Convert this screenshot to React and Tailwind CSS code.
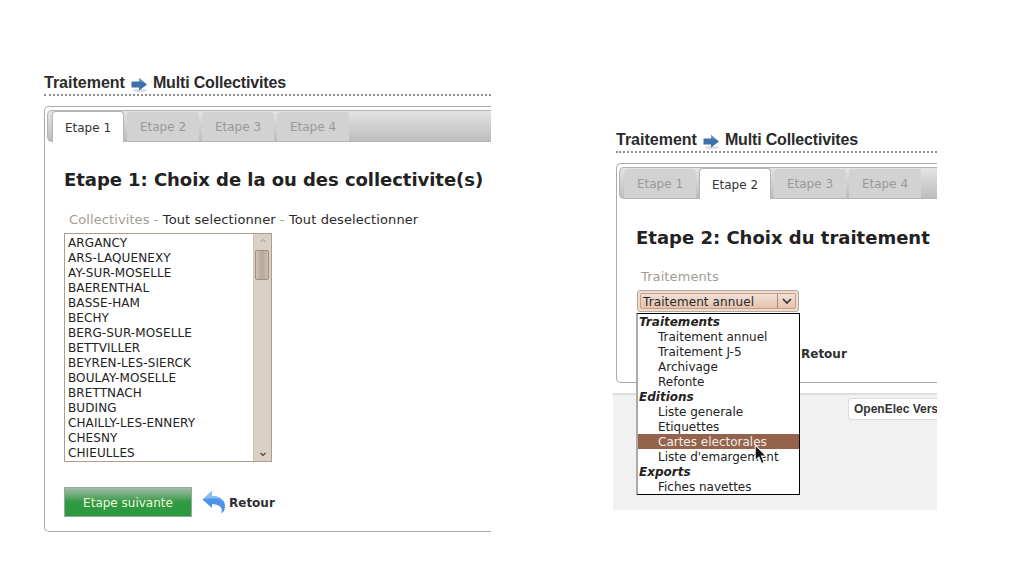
const DJ = "font-['DejaVu_Sans',sans-serif]";

function Arrow() {
  return (
    <svg width="17" height="16" viewBox="0 0 17 16" className="shrink-0">
      <ellipse cx="9" cy="13.5" rx="7" ry="1.5" fill="#d9d9d9" />
      <path d="M0.5 4.5H8V1L16 7.5L8 13.5V10.5H0.5Z" fill="#3f6fae" />
      <path d="M0.5 4.5H8V1L12 4.5Z" fill="#6f96c8" />
    </svg>
  );
}

function Title() {
  return (
    <div className="flex items-center h-[23px] pb-[2px] border-b-2 border-dotted border-[#8f8f8f] font-['Liberation_Sans',sans-serif] font-bold text-[16px] text-[#2b2b2b] whitespace-nowrap">
      <span>Traitement</span>
      <span className="ml-[6px] mr-[5px] mt-[4px]"><Arrow /></span>
      <span className="tracking-[-0.16px]">Multi Collectivites</span>
    </div>
  );
}

function Tabs({ active }) {
  return (
    <div className="h-[32px] ml-[2px] mt-[3px] rounded-l-[5px] border border-r-0 border-[#b5b5b5] bg-gradient-to-b from-[#e4e4e4] to-[#bdbdbd] flex items-end pl-[4px] gap-[3px]">
      {[1, 2, 3, 4].map((n) => (
        <div
          key={n}
          className={
            n === active
              ? `w-[72px] h-[31px] -mb-px pt-[1px] bg-white border border-b-0 border-[#b5b5b5] rounded-t-[4px] flex items-center justify-center text-[12px] text-[#333] ${DJ}`
              : `w-[72px] h-[29px] pt-[1px] bg-[#d2d2d2] rounded-t-[4px] flex items-center justify-center text-[12px] text-[#999] ${DJ}`
          }
        >
          Etape {n}
        </div>
      ))}
    </div>
  );
}

const communes = [
  "ARGANCY", "ARS-LAQUENEXY", "AY-SUR-MOSELLE", "BAERENTHAL", "BASSE-HAM", "BECHY",
  "BERG-SUR-MOSELLE", "BETTVILLER", "BEYREN-LES-SIERCK", "BOULAY-MOSELLE", "BRETTNACH",
  "BUDING", "CHAILLY-LES-ENNERY", "CHESNY", "CHIEULLES",
];

function ListBox() {
  return (
    <div className="ml-[19px] mt-[5px] w-[208px] h-[229px] border border-[#ad9d8c] flex bg-white overflow-hidden">
      <div className={`flex-1 pl-[3px] pt-[2px] text-[12px] leading-[15px] tracking-[0.1px] text-[#222] ${DJ}`}>
        {communes.map((c) => <div key={c}>{c}</div>)}
      </div>
      <div className="w-[18px] bg-[#dbd0c6] border-l border-[#cfc4b9] flex flex-col items-center justify-between relative">
        <svg width="10" height="14" viewBox="0 0 10 14"><path d="M2.5 8L5 5.5L7.5 8" stroke="#b8ada1" strokeWidth="1.2" fill="none" /></svg>
        <div className="absolute left-[1px] top-[16px] w-[14px] h-[30px] rounded-[2px] border border-[#9c8f81] bg-gradient-to-r from-[#cfc3b6] via-[#b5a898] to-[#cbbfb2]" />
        <svg width="10" height="14" viewBox="0 0 10 14"><path d="M2.5 6L5 8.5L7.5 6" stroke="#4a4036" strokeWidth="1.2" fill="none" /></svg>
      </div>
    </div>
  );
}

function Back() {
  return (
    <div className="flex items-center ml-[10px]">
      <svg width="24" height="24" viewBox="0 0 24 24" className="shrink-0">
        <path d="M0.5 9.5L10 1V6C18 6 23 10 23 16C23 19 22 22 19.5 23.5C20.5 19 19.5 14.5 10 14V18Z" fill="#4f93e8" />
        <path d="M10 1V6C15 6 20 8 22 12C18 8.5 14 8 8 8.5L2 9Z" fill="#8dbdf5" />
      </svg>
      <span className={`ml-[3px] pt-[1px] font-bold text-[12px] text-[#2f2f2f] ${DJ}`}>Retour</span>
    </div>
  );
}

function Group({ children }) {
  return <div className="h-[15px] pt-[1px] font-bold italic pl-[1px]">{children}</div>;
}
function Opt({ children, on }) {
  return <div className={on ? "h-[15px] pt-[1px] pl-[20px] bg-[#95634b] text-[#f3ece8]" : "h-[15px] pt-[1px] pl-[20px]"}>{children}</div>;
}

export default function App() {
  return (
    <div className="w-[1024px] h-[574px] bg-white overflow-hidden flex items-start relative">
      <div className="ml-[44px] mt-[73px] w-[447px] overflow-hidden shrink-0">
        <Title />
        <div className="mt-[10px] h-[426px] border border-r-0 border-[#aaaaaa] rounded-l-[5px]">
          <Tabs active={1} />
          <h2 className={`ml-[19px] mt-[26px] text-[18px] leading-[24px] tracking-[-0.05px] font-bold text-[#222] whitespace-nowrap ${DJ}`}>
            Etape 1: Choix de la ou des collectivite(s)
          </h2>
          <div className={`ml-[24px] mt-[20px] h-[16px] leading-[16px] text-[13px] tracking-[0.1px] text-[#a39c95] whitespace-nowrap ${DJ}`}>
            Collectivites - <span className="text-[#2a2a2a]">Tout selectionner</span> - <span className="text-[#2a2a2a]">Tout deselectionner</span>
          </div>
          <ListBox />
          <div className="flex items-center ml-[19px] mt-[25px]">
            <div className={`w-[128px] h-[30px] pt-[1px] border border-[#9aa79c] bg-gradient-to-b from-[#9dbba6] via-[#2f9a46] to-[#2a9a3e] flex items-center justify-center text-[12px] text-[#f2f7d8] ${DJ}`}>
              Etape suivante
            </div>
            <Back />
          </div>
        </div>
      </div>

      <div className="ml-[122px] mt-[130px] w-[324px] shrink-0 overflow-hidden relative h-[380px]">
        <div className="pl-[3px]">
          <Title />
          <div className="mt-[10px] h-[220px] border border-r-0 border-[#aaaaaa] rounded-l-[5px]">
            <Tabs active={2} />
            <h2 className={`ml-[19px] mt-[27px] text-[18px] leading-[24px] font-bold text-[#222] whitespace-nowrap ${DJ}`}>
              Etape 2: Choix du traitement
            </h2>
            <div className={`ml-[24px] mt-[19px] h-[16px] leading-[16px] text-[13px] tracking-[0.1px] text-[#a39c95] ${DJ}`}>Traitements</div>
            <div className="ml-[20px] mt-[5px] w-[162px] h-[22px] rounded-[3px] border border-[#b3a79b] bg-[#e9dcd2] p-[2px]">
              <div className={`h-full border border-[#d39a7c] rounded-[2px] bg-gradient-to-b from-[#efe0d6] to-[#e4c3b0] flex items-center text-[12px] tracking-[0.1px] text-[#2a2a2a] ${DJ}`}>
                <span className="flex-1 pl-[2px] pt-[1px] whitespace-nowrap">Traitement annuel</span>
                <span className="w-[18px] h-full border-l border-[#a08d7e] flex items-center justify-center">
                  <svg width="10" height="8" viewBox="0 0 10 8"><path d="M1 2L5 6L9 2" stroke="#333" strokeWidth="1.6" fill="none" /></svg>
                </span>
              </div>
            </div>
            <div className="flex items-center ml-[19px] mt-[25px]">
              <div className="w-[128px] h-[30px]" />
              <div className="ml-[37px]">
                <span className={`font-bold text-[12px] text-[#2f2f2f] ${DJ}`}>Retour</span>
              </div>
            </div>
          </div>
        </div>
        <div className="mt-[10px] h-[117px] bg-[#f1f1f1] border-t-2 border-[#dedede] relative pl-[235px] pt-[3px]">
          <div className="h-[22px] rounded-l-[4px] border border-r-0 border-[#dddddd] bg-white flex items-center pl-[5px] font-['Liberation_Sans',sans-serif] font-bold text-[12px] text-[#333] whitespace-nowrap">
            OpenElec Vers
          </div>
        </div>
        <div className={`absolute left-[23px] top-[183px] w-[164px] border border-black border-l-2 border-l-[#aaaaaa] bg-white text-[12px] leading-[15px] text-[#222] ${DJ}`}>
          <Group>Traitements</Group>
          <Opt>Traitement annuel</Opt>
          <Opt>Traitement J-5</Opt>
          <Opt>Archivage</Opt>
          <Opt>Refonte</Opt>
          <Group>Editions</Group>
          <Opt>Liste generale</Opt>
          <Opt>Etiquettes</Opt>
          <Opt on>Cartes electorales</Opt>
          <Opt>Liste d'emargement</Opt>
          <Group>Exports</Group>
          <Opt>Fiches navettes</Opt>
        </div>
        <svg width="15" height="21" viewBox="0 0 14 20" className="absolute left-[141px] top-[314px]">
          <path d="M1 1V15.5L4.5 12.5L7 18.5L9.5 17.5L7 11.5H11.5Z" fill="#111" stroke="#f5f5f5" strokeWidth="1" />
        </svg>
      </div>
    </div>
  );
}
